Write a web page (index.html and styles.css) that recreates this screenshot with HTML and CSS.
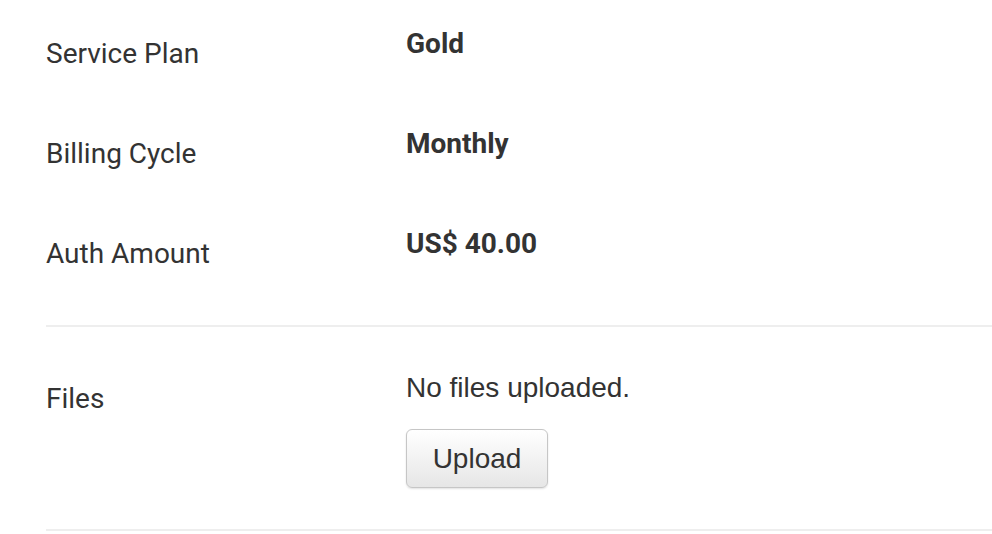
FILE: index.html
```html
<!DOCTYPE html>
<html>
<head>
<meta charset="utf-8">
<link rel="stylesheet" href="styles.css">
</head>
<body>
<div class="page">
  <section class="group group-plan">
    <div class="row">
      <div class="label">Service Plan</div>
      <div class="value">Gold</div>
    </div>
    <div class="row">
      <div class="label">Billing Cycle</div>
      <div class="value">Monthly</div>
    </div>
    <div class="row">
      <div class="label">Auth Amount</div>
      <div class="value">US$ 40.00</div>
    </div>
  </section>
  <section class="group group-files">
    <div class="row row-files">
      <div class="label">Files</div>
      <div class="value-plain">
        <p class="note">No files uploaded.</p>
        <button class="btn" type="button">Upload</button>
      </div>
    </div>
  </section>
</div>
</body>
</html>
```
FILE: styles.css
```css
html, body {
  margin: 0;
  padding: 0;
  background: #fff;
}
body {
  font-family: Roboto, "Liberation Sans", sans-serif;
  color: #333;
}
.page {
  padding-left: 46px;
}
.group {
  border-bottom: 2px solid #eeeeee;
}
.group-plan {
  padding-bottom: 25px;
}
.row {
  display: grid;
  grid-template-columns: 360px 1fr;
  height: 100px;
  padding-top: 26px;
  box-sizing: border-box;
}
.label {
  font-size: 28px;
  line-height: 36px;
  margin-top: 10px;
}
.value {
  font-size: 28px;
  font-weight: 700;
  line-height: 36px;
}
.group-files {
  padding-top: 43px;
  padding-bottom: 41px;
}
.row-files {
  height: auto;
  padding-top: 0;
}
.row-files .label {
  margin-top: 11px;
}
.value-plain {
  font-family: "Liberation Sans", Arial, sans-serif;
}
.note {
  margin: 0;
  font-size: 28px;
  line-height: 36px;
}
.btn {
  display: block;
  margin-top: 23px;
  width: 142px;
  height: 59px;
  padding: 0;
  font-family: "Liberation Sans", Arial, sans-serif;
  font-size: 28px;
  color: #333;
  background: linear-gradient(#ffffff, #e6e6e6);
  border: 1px solid #c6c6c6;
  border-radius: 6px;
  box-shadow: 0 1px 2px rgba(0,0,0,0.12);
}
```
